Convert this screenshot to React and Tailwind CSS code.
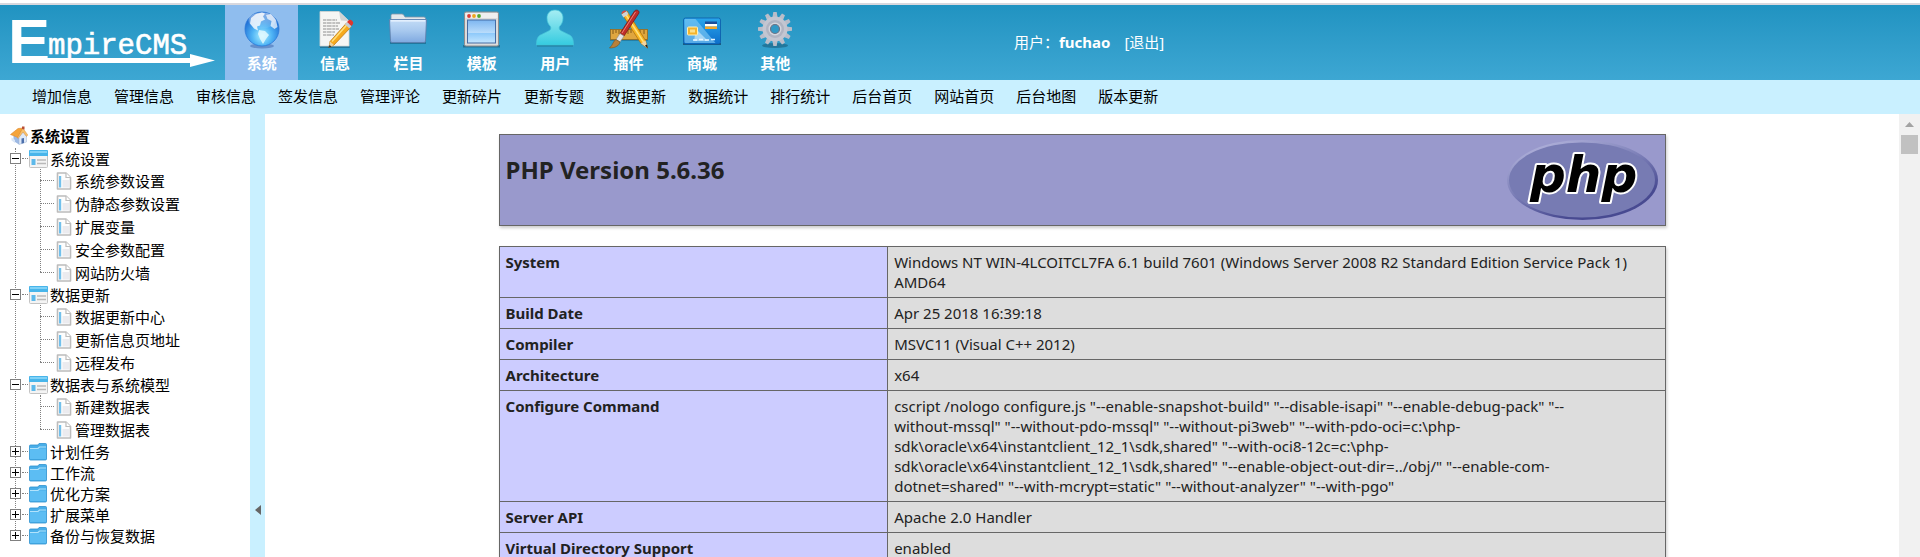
const svgBase = { width: 40, height: 40, viewBox: "0 0 40 40", "aria-hidden": true };

function GlobeIcon() {
  return (
    <svg {...svgBase}>
      <defs>
        <radialGradient id="globe" cx="0.5" cy="0.7" r="0.65">
          <stop offset="0" stopColor="#a9f0ff" />
          <stop offset="0.45" stopColor="#4fb4f5" />
          <stop offset="1" stopColor="#1763cf" />
        </radialGradient>
        <linearGradient id="globeShine" x1="0" y1="0" x2="0" y2="1">
          <stop offset="0" stopColor="#fff" stopOpacity="0.85" />
          <stop offset="1" stopColor="#fff" stopOpacity="0.1" />
        </linearGradient>
      </defs>
      <ellipse cx="20" cy="37" rx="12" ry="2.4" fill="#3b62a8" opacity="0.5" />
      <circle cx="20" cy="20" r="17" fill="url(#globe)" stroke="#2a78d8" strokeWidth="0.8" />
      <path d="M9 9l5-4 6-1.5 3 1-2 3 2 3-4 2-1 4-3 1 1 4-4-2-4-5z" fill="#fff" opacity="0.8" />
      <path d="M24 6l5-1 5 6 1.500 7-3 2-4-3 1-5-4-2z" fill="#fff" opacity="0.7" />
      <path d="M17 21l6 1 4 4-3 4-3 5-3-5-2-5z" fill="#e9fbff" opacity="0.8" />
      <ellipse cx="20" cy="11.500" rx="13.500" ry="8" fill="url(#globeShine)" opacity="0.6" />
    </svg>
  );
}

function ArticleIcon() {
  return (
    <svg {...svgBase}>
      <path d="M5 37h29l1 2H5z" fill="#14506e" opacity="0.5" />
      <path d="M5 2.500h19L34 12v25H5z" fill="#f6f6f4" stroke="#d5d5d2" strokeWidth="0.8" />
      <path d="M24 2.500 34 12l-8-.5c-1.500-3-1-6-2-9z" fill="#d2d3d3" />
      <path d="M8 11h14M8 14h17M8 17h15M8 20h16M8 23h12M8 26h11" stroke="#8d8d8d" strokeWidth="1.200" strokeDasharray="3 .6 5 .7" />
      <path d="M31.500 14 36 18 19 36l-5 2.500 1-6z" fill="#f6a91c" stroke="#b66e0c" strokeWidth="0.7" />
      <path d="M32.600 15 17 32.500" stroke="#ffe07a" strokeWidth="1.500" />
      <path d="m15 32.500 4 3.500-5 2.500z" fill="#efd3a0" />
      <path d="m14.500 36 2 1.500-3 1.500z" fill="#333" />
      <path d="m30 15.500 2-2.500 4.500 4-2 2.500z" fill="#c6cdd4" />
      <path d="m32 13 2-2c2-1 5 2 4 4l-1.500 2z" fill="#e0362c" />
    </svg>
  );
}

function FolderIcon() {
  return (
    <svg {...svgBase}>
      <defs>
        <linearGradient id="folder" x1="0" y1="0" x2="0" y2="1">
          <stop offset="0" stopColor="#c3dcf6" />
          <stop offset="0.5" stopColor="#a7c8ee" />
          <stop offset="1" stopColor="#7fa9e0" />
        </linearGradient>
      </defs>
      <path d="M2 33h36v2H2z" fill="#14506e" opacity="0.5" />
      <path d="M3 9V6.500Q3 5 4.500 5H14q1.500 0 2 1.500L17 8h19q1.500 0 1.500 1.500V30h-35z" fill="#e4e8ec" stroke="#8496a8" strokeWidth="0.8" />
      <path d="M1.500 10.500h37L37.500 32q0 1.500-1.500 1.500H4Q2.500 33.500 2.500 32z" fill="url(#folder)" stroke="#5b7fae" strokeWidth="0.9" />
      <path d="M3 11.800h34" stroke="#eef6ff" strokeWidth="1.200" />
    </svg>
  );
}

function TemplateIcon() {
  return (
    <svg {...svgBase}>
      <defs>
        <linearGradient id="pane" x1="0" y1="0" x2="0" y2="1">
          <stop offset="0" stopColor="#7db6f0" />
          <stop offset="0.55" stopColor="#b9dcfb" />
          <stop offset="0.56" stopColor="#8cc8fa" />
          <stop offset="1" stopColor="#c4e6ff" />
        </linearGradient>
      </defs>
      <path d="M1 36h37v2.500H1z" fill="#14506e" opacity="0.55" />
      <rect x="2.500" y="3" width="34" height="34" rx="1.500" fill="#dcdcdc" stroke="#8d8d8d" />
      <path d="M3.500 4h32v5h-32z" fill="#efefef" />
      <circle cx="7" cy="7" r="1.900" fill="#db3c35" />
      <circle cx="12" cy="7" r="1.900" fill="#eda51c" />
      <circle cx="17" cy="7" r="1.900" fill="#54a82f" />
      <rect x="5.500" y="11" width="28" height="23" fill="url(#pane)" stroke="#456ca3" />
    </svg>
  );
}

function UserIcon() {
  return (
    <svg {...svgBase}>
      <defs>
        <linearGradient id="user" x1="0" y1="0" x2="0" y2="1">
          <stop offset="0" stopColor="#a5edf3" />
          <stop offset="1" stopColor="#35cbe0" />
        </linearGradient>
      </defs>
      <path d="M2 35.500h36v2H2z" fill="#14667f" opacity="0.6" />
      <path d="M20 1c5 0 8 3.500 8 8 0 4-1.500 6.500-3.500 8.500-1 2 0 3.500 2 4.500l7 3.500c3.500 1.500 5 4 5 10.500h-37c0-6.500 1.500-9 5-10.500l7-3.500c2-1 3-2.500 2-4.500-2-2-3.500-4.500-3.500-8.500 0-4.500 3-8 8-8z" fill="url(#user)" stroke="#45c4d8" strokeWidth="0.7" />
    </svg>
  );
}

function PluginIcon() {
  return (
    <svg {...svgBase}>
      <path d="M1 30h38v2H1z" fill="#14506e" opacity="0.4" />
      <rect x="1.500" y="20.500" width="37" height="10" fill="#dfa63f" stroke="#9b6a1a" strokeWidth="0.8" />
      <path d="M4 21v4M7 21v3M10 21v4M13 21v3M19 21v4M22 21v3M27 21v4M31 21v3M35 21v4" stroke="#7b5113" strokeWidth="0.9" />
      <path d="m13 5 5-3 18.500 29.500L38.500 39l-6.500-4.500z" fill="#f7b522" stroke="#a96a0b" strokeWidth="0.7" />
      <path d="m16.500 5 18 28" stroke="#ffe17b" strokeWidth="1.500" />
      <path d="m32 34.500 4.500-3L38.500 39z" fill="#f0d6a5" />
      <path d="m36 36.500 2-1 .8 4z" fill="#222" />
      <path d="m12.500 5.500 5-3.500 2 3-5 3.500z" fill="#ced2d5" />
      <path d="M12.500 5C12 2.500 16 .5 17.500 2z" fill="#df4b40" />
      <path d="M25.500 2c2-2 5-.5 4.500 2L15 27l-4-2.500z" fill="#bf2d2a" stroke="#76120f" strokeWidth="0.7" />
      <path d="M26.500 3 13 24" stroke="#ef8078" strokeWidth="1" />
      <path d="m11 24.500 4 2.500-4 6-4-2.500z" fill="#e4e4e4" stroke="#8c8c8c" strokeWidth="0.6" />
      <path d="m7 30.500 4 2.500c-1 4-5 6-10.500 6C4 36 4 32 7 30.500z" fill="#b98038" stroke="#76501e" strokeWidth="0.6" />
    </svg>
  );
}

function CardIcon() {
  return (
    <svg {...svgBase}>
      <defs>
        <linearGradient id="card" x1="0" y1="0" x2="0" y2="1">
          <stop offset="0" stopColor="#2aa6ec" />
          <stop offset="1" stopColor="#0c6ecb" />
        </linearGradient>
      </defs>
      <path d="M1 34h38v2H1z" fill="#123f63" opacity="0.7" />
      <rect x="1.500" y="9" width="37" height="26" rx="2" fill="url(#card)" stroke="#0b5aa8" strokeWidth="0.8" />
      <path d="M2.500 11q0-1 1-1h10l20 24H3.500q-1 0-1-1z" fill="#7fcaf4" opacity="0.65" />
      <path d="M14 20l12 12H12z" fill="#e5f5fd" opacity="0.55" />
      <path d="M23 12.500h12v2.500H23z" fill="#1b4e9b" />
      <path d="M23 15h12v2.500H23z" fill="#fff" />
      <path d="M23 17.500h12V20H23z" fill="#f1a72a" />
      <rect x="5.500" y="18" width="10" height="8" rx="1" fill="#f3b42e" stroke="#fff0b8" />
      <path d="M8 20.500h5v3H8z" fill="#fbe08b" />
      <path d="M11 31h4M17 30.500h4M23 31h4M29 30.500h4" stroke="#e8f6ff" strokeWidth="1.500" />
    </svg>
  );
}

function GearIcon() {
  return (
    <svg {...svgBase}>
      <ellipse cx="20" cy="36.500" rx="13" ry="2.500" fill="#14506e" opacity="0.5" />
      {[0, 30, 60, 90, 120, 150].map((a) => (
        <path key={a} d="M18.300 3h3.400l.9 6v22l-.9 6h-3.400l-.9-6v-22z" fill="#b9bdc9" transform={`rotate(${a} 20 20)`} />
      ))}
      <circle cx="20" cy="20" r="12.500" fill="#c3c6d1" />
      <circle cx="20" cy="20" r="9" fill="#b0b4c2" />
      <circle cx="20" cy="20" r="6.500" fill="#d4d6de" />
      <circle cx="20" cy="20" r="4.500" fill="#3298c5" stroke="#6e7486" strokeWidth="1.200" />
    </svg>
  );
}

function HomeIcon() {
  return (
    <svg width="18" height="19" viewBox="0 0 18 19" aria-hidden="true">
      <path d="M3.500 9.500 9 12v6.500L3.500 15z" fill="#9db9e3" />
      <path d="M9 11.500 13 6l3.500 4v6L9 18.500z" fill="#dfe9f7" stroke="#9db2d3" strokeWidth="0.5" />
      <path d="M11.500 12.500 14 12v5l-2.500.800z" fill="#4d70ac" />
      <path d="M.5 8.500 8 2.500l5-.5-5 9.500z" fill="#f5a43a" stroke="#d97b1b" strokeWidth="0.5" />
      <path d="m12.800 2 5 7-1.300 1.500L13 6l-5 6.500-.5-1z" fill="#f8c169" stroke="#d4822d" strokeWidth="0.4" />
      <path d="M12 .5h2.500v3L12 3z" fill="#b84e35" />
      <path d="M1.500 11.500 5 14v3l-3.500-2.500z" fill="#dae6f6" />
    </svg>
  );
}

function PanelIcon() {
  return (
    <svg width="19" height="18" viewBox="0 0 19 18" aria-hidden="true">
      <rect x="0.500" y="0.500" width="18" height="17" rx="1" fill="#f4f4f4" stroke="#c3c3c3" />
      <path d="M0 1q0-1 1-1h17q1 0 1 1v5H0z" fill="#48b5ea" />
      <path d="M1 1h17v2H1z" fill="#80d2f7" />
      <path d="M2.500 9h4v6h-4z" fill="#5db9ea" />
      <path d="M8 10h9M8 13.500h9" stroke="#b9b9b9" strokeWidth="1.500" />
    </svg>
  );
}

function ClosedFolderIcon() {
  return (
    <svg width="19" height="18" viewBox="0 0 19 18" aria-hidden="true">
      <path d="M.5 3q0-1 1-1H9l1-1.500h6.500q1 0 1 1V16q0 1-1 1h-15q-1 0-1-1z" fill="#49aee8" stroke="#2f92cf" strokeWidth="0.8" />
      <path d="M1 5.500h16V16H1z" fill="#5cbdf3" />
      <path d="M1 5.500h8L10.500 4H17" fill="none" stroke="#b2e3fc" strokeWidth="1.200" />
    </svg>
  );
}

function PageIcon() {
  return (
    <svg width="16" height="18" viewBox="0 0 16 18" aria-hidden="true">
      <path d="M1.500 1h8.500l4.500 4.500V17h-13z" fill="#fdfdfd" stroke="#bcbcbc" strokeWidth="1.600" strokeLinejoin="round" />
      <path d="M6.500 8H13v7.500H6.500z" fill="#ebebef" />
      <path d="M10 1v4.500h4.500" fill="#fff" stroke="#bcbcbc" strokeWidth="1.200" />
      <path d="M3 4h2.200v11.500H3z" fill="#72c0ec" />
    </svg>
  );
}

function EmpireLogo() {
  return (
    <svg width="216" height="75" viewBox="0 0 216 75" role="img" aria-label="EmpireCMS" fill="#fff">
      <text x="8" y="58" fontFamily="Liberation Sans, sans-serif" fontWeight="700" fontSize="63">E</text>
      <text x="48" y="49" fontFamily="Liberation Mono, monospace" fontSize="29" stroke="#fff" strokeWidth="0.6">mpireCMS</text>
      <path d="M13 53h177v-4l25 6.500-25 6.500v-4H13z" />
    </svg>
  );
}

function PhpLogo() {
  return (
    <svg width="151" height="80" viewBox="0 0 151 80" role="img" aria-label="PHP logo">
      <defs>
        <linearGradient id="rim" x1="0.2" y1="0" x2="0.8" y2="1">
          <stop offset="0" stopColor="#b3b4dc" />
          <stop offset="0.45" stopColor="#7a7db6" />
          <stop offset="0.8" stopColor="#484a91" />
        </linearGradient>
      </defs>
      <ellipse cx="75.500" cy="40" rx="75.500" ry="40" fill="url(#rim)" />
      <ellipse cx="75" cy="40" rx="73" ry="37.500" fill="#777bb3" />
      <text x="23" y="52" fontFamily="DejaVu Sans, sans-serif" fontWeight="700" fontStyle="italic" fontSize="50" fill="#000" stroke="#fff" strokeWidth="4" paintOrder="stroke" strokeLinejoin="round">php</text>
    </svg>
  );
}

const navItems = [
  ["系统", GlobeIcon],
  ["信息", ArticleIcon],
  ["栏目", FolderIcon],
  ["模板", TemplateIcon],
  ["用户", UserIcon],
  ["插件", PluginIcon],
  ["商城", CardIcon],
  ["其他", GearIcon],
];

const quickLinks = [
  "增加信息", "管理信息", "审核信息", "签发信息", "管理评论", "更新碎片", "更新专题",
  "数据更新", "数据统计", "排行统计", "后台首页", "网站首页", "后台地图", "版本更新",
];

const tree = [
  { label: "系统设置", children: ["系统参数设置", "伪静态参数设置", "扩展变量", "安全参数配置", "网站防火墙"] },
  { label: "数据更新", children: ["数据更新中心", "更新信息页地址", "远程发布"] },
  { label: "数据表与系统模型", children: ["新建数据表", "管理数据表"] },
  { label: "计划任务" },
  { label: "工作流" },
  { label: "优化方案" },
  { label: "扩展菜单" },
  { label: "备份与恢复数据" },
];

const info = [
  ["System", ["Windows NT WIN-4LCOITCL7FA 6.1 build 7601 (Windows Server 2008 R2 Standard Edition Service Pack 1)", "AMD64"]],
  ["Build Date", ["Apr 25 2018 16:39:18"]],
  ["Compiler", ["MSVC11 (Visual C++ 2012)"]],
  ["Architecture", ["x64"]],
  ["Configure Command", [
    'cscript /nologo configure.js "--enable-snapshot-build" "--disable-isapi" "--enable-debug-pack" "--',
    'without-mssql" "--without-pdo-mssql" "--without-pi3web" "--with-pdo-oci=c:\\php-',
    'sdk\\oracle\\x64\\instantclient_12_1\\sdk,shared" "--with-oci8-12c=c:\\php-',
    'sdk\\oracle\\x64\\instantclient_12_1\\sdk,shared" "--enable-object-out-dir=../obj/" "--enable-com-',
    'dotnet=shared" "--with-mcrypt=static" "--without-analyzer" "--with-pgo"',
  ]],
  ["Server API", ["Apache 2.0 Handler"]],
  ["Virtual Directory Support", ["enabled"]],
];

function TreeSection({ item }) {
  const open = Boolean(item.children);
  return (
    <li>
      <div className="flex h-[21px] items-center">
        <button
          type="button"
          aria-expanded={open}
          aria-label={item.label}
          className="relative flex size-[11px] items-center justify-center border border-[#808080] bg-white"
        >
          <svg width="7" height="7" viewBox="0 0 7 7" aria-hidden="true">
            <path d={open ? "M0 3h7v1H0z" : "M0 3h7v1H0zM3 0h1v7H3z"} fill="#000" />
          </svg>
        </button>
        <span className="mr-px ml-px w-[6px] border-t border-dotted border-[#808080]" />
        {open ? <PanelIcon /> : <ClosedFolderIcon />}
        <a href="#" className="ml-0.5">{item.label}</a>
      </div>
      {open && (
        <ul className="relative ml-[30px] before:absolute before:top-0 before:bottom-3 before:left-0 before:border-l before:border-dotted before:border-[#808080]">
          {item.children.map((child) => (
            <li key={child} className="flex h-[23px] items-center">
              <span className="mr-0.5 w-[14px] border-t border-dotted border-[#808080]" />
              <PageIcon />
              <a href="#" className="ml-[3px]">{child}</a>
            </li>
          ))}
        </ul>
      )}
    </li>
  );
}

export default function App() {
  return (
    <div className="flex h-screen flex-col overflow-hidden bg-white font-['Noto_Sans','Noto_Sans_CJK_SC',sans-serif] text-[15px] leading-5 whitespace-nowrap text-black">
      <header className="mt-[3px] shrink-0 border-t-2 border-[#d8d8de]">
        <div className="flex h-[75px] bg-linear-to-b from-[#2093c1] to-[#3da7d3] text-white">
          <a href="#" className="w-[225px] shrink-0">
            <EmpireLogo />
          </a>
          <nav className="grid w-[587px] shrink-0 grid-cols-8">
            {navItems.map(([label, Icon], i) => (
              <a
                key={label}
                href="#"
                className={
                  i === 0
                    ? "flex flex-col items-center bg-[#8fbdee] pt-1 font-bold"
                    : "flex flex-col items-center pt-1 font-bold"
                }
              >
                <Icon />
                <span className="pt-1">{label}</span>
              </a>
            ))}
          </nav>
          <div className="ml-[202px] flex items-center pb-0.5">
            <span>用户：</span>
            <b>fuchao</b>
            <a href="#" className="ml-3.5">[退出]</a>
          </div>
        </div>
        <nav className="flex h-[34px] items-center gap-[22px] bg-[#c9f0ff] pb-0.5 pl-8">
          {quickLinks.map((label) => (
            <a key={label} href="#">{label}</a>
          ))}
        </nav>
      </header>

      <div className="flex min-h-0 flex-1">
        <aside className="w-[250px] shrink-0 overflow-hidden pt-[11px] pl-[10px]">
          <h2 className="mb-0.5 flex h-[21px] items-center gap-0.5 font-bold">
            <HomeIcon />
            系统设置
          </h2>
          <ul className="relative before:absolute before:top-0 before:bottom-3 before:left-[5px] before:border-l before:border-dotted before:border-[#808080]">
            {tree.map((item) => (
              <TreeSection key={item.label} item={item} />
            ))}
          </ul>
        </aside>

        <button type="button" aria-label="收起菜单" className="flex w-[15px] shrink-0 flex-col items-center bg-[#c9f0ff] pt-[391px]">
          <svg width="6" height="10" viewBox="0 0 6 10" aria-hidden="true">
            <path d="M6 0v10L0 5z" fill="#666" />
          </svg>
        </button>

        <main className="min-w-0 flex-1 overflow-hidden pt-5 text-[#222]">
          <div className="mx-auto w-[1167px] max-w-full">
            <div className="mb-5 flex h-[92px] items-start justify-between border border-[#666] bg-[#9999cc] py-[5px] pr-[7px] pl-[6px] shadow-[1px_2px_3px_#ccc]">
              <h1 className="pt-3.5 text-2xl leading-8 font-bold">PHP Version 5.6.36</h1>
              <PhpLogo />
            </div>
            <table className="w-full table-fixed border-collapse bg-[#ddd] shadow-[1px_2px_3px_#ccc]">
              <colgroup>
                <col className="w-1/3" />
                <col />
              </colgroup>
              <tbody>
                {info.map(([name, lines]) => (
                  <tr key={name}>
                    <th scope="row" className="border border-[#666] bg-[#ccccff] px-[6px] py-[5px] text-left align-top font-bold">
                      {name}
                    </th>
                    <td className="border border-[#666] px-[6px] py-[5px] align-top">
                      {lines.map((line) => (
                        <span key={line} className="block">{line}</span>
                      ))}
                    </td>
                  </tr>
                ))}
              </tbody>
            </table>
          </div>
        </main>

        <div className="flex w-[21px] shrink-0 flex-col items-center bg-[#f1f1f1]">
          <button type="button" aria-label="向上滚动" className="flex h-[21px] w-full items-center justify-center">
            <svg width="9" height="5" viewBox="0 0 9 5" aria-hidden="true">
              <path d="M0 5h9L4.500 0z" fill="#a3a3a3" />
            </svg>
          </button>
          <div className="h-[19px] w-[17px] bg-[#c1c1c1]" />
        </div>
      </div>
    </div>
  );
}
